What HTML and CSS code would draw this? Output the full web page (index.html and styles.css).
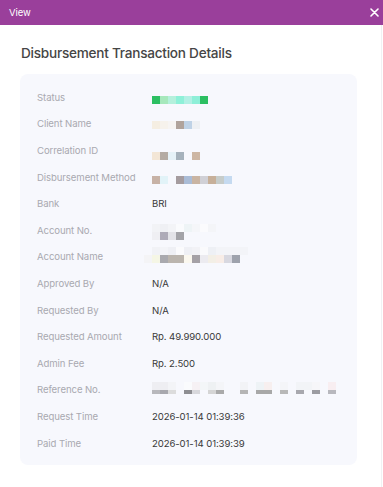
FILE: index.html
```html
<!DOCTYPE html>
<html>
<head>
<meta charset="utf-8">
<link rel="stylesheet" href="styles.css">
</head>
<body>
<div class="modal">
  <div class="modal-header">
    <span class="modal-title">View</span>
    <span class="close" aria-label="close">
      <svg width="9" height="9" viewBox="0 0 9 9"><path d="M1 1 L8 8 M8 1 L1 8" stroke="#fff" stroke-width="1.6" stroke-linecap="round"/></svg>
    </span>
  </div>
  <div class="modal-body">
    <h2 class="heading">Disbursement Transaction Details</h2>
    <div class="card">
      <div class="row"><span class="label">Status</span><span class="value"><i class="mosaic m-status"></i></span></div>
      <div class="row"><span class="label">Client Name</span><span class="value"><i class="mosaic m-client"></i></span></div>
      <div class="row"><span class="label">Correlation ID</span><span class="value"><i class="mosaic m-corr"></i></span></div>
      <div class="row"><span class="label">Disbursement Method</span><span class="value"><i class="mosaic m-method"></i></span></div>
      <div class="row"><span class="label">Bank</span><span class="value">BRI</span></div>
      <div class="row"><span class="label">Account No.</span><span class="value"><i class="mosaic m-accno"></i></span></div>
      <div class="row"><span class="label">Account Name</span><span class="value"><i class="mosaic m-accname"></i></span></div>
      <div class="row"><span class="label">Approved By</span><span class="value">N/A</span></div>
      <div class="row"><span class="label">Requested By</span><span class="value">N/A</span></div>
      <div class="row"><span class="label">Requested Amount</span><span class="value">Rp. 49.990.000</span></div>
      <div class="row"><span class="label">Admin Fee</span><span class="value">Rp. 2.500</span></div>
      <div class="row"><span class="label">Reference No.</span><span class="value"><i class="mosaic m-ref"></i></span></div>
      <div class="row"><span class="label">Request Time</span><span class="value">2026-01-14 01:39:36</span></div>
      <div class="row"><span class="label">Paid Time</span><span class="value">2026-01-14 01:39:39</span></div>
    </div>
  </div>
</div>
</body>
</html>
```
FILE: styles.css
```css
* { box-sizing: border-box; }
html, body { margin: 0; padding: 0; background: #fff; }
body { font-family: Inter, "Noto Sans", sans-serif; color: #333; }

.modal { width: 383px; height: 487px; display: flex; flex-direction: column; }

.modal-header {
  height: 25px;
  background: #9a3f9b;
  display: flex;
  align-items: center;
  justify-content: space-between;
  padding: 0 4px 0 9px;
}
.modal-title { color: #fff; font-size: 9.5px; letter-spacing: -0.1px; }
.close { display: flex; width: 10px; height: 10px; align-items: center; justify-content: center; }

.modal-body {
  flex: 1;
  padding: 18px 24px 0 20px;
  border-right: 1px solid #f1f1f3;
  margin-right: 1px;
}

.heading {
  margin: 0 0 11px 1px;
  font-size: 13.6px;
  font-weight: 500;
  color: #454545;
  letter-spacing: -0.25px;
  line-height: 20px;
}

.card {
  background: #f7f8fd;
  border-radius: 8px;
  padding: 10px 0 9px 17px;
  display: grid;
  grid-auto-rows: 26.6px;
}

.row {
  display: grid;
  grid-template-columns: 115px 1fr;
  align-items: center;
  font-size: 9.6px;
  letter-spacing: -0.1px;
}
.label { color: #a9a9b0; }
.value { color: #3a3a3a; position: relative; height: 100%; display: flex; align-items: center; }

.mosaic { display: block; position: relative; height: 8px; }

.m-status {
  width: 56px; top: 3px;
  background: linear-gradient(90deg, #2cbf62 0 8px, #a6e8bc 8px 16px, #b4f0dc 16px 24px, #8ef0d8 24px 32px, #b2f0e4 32px 40px, #8eefd8 40px 48px, #2cbf62 48px 56px);
}
.m-client {
  width: 48px; top: 1px;
  background: linear-gradient(90deg, #f5eee2 0 8px, #f6f2ec 8px 16px, #f6f4f3 16px 24px, #b0a39c 24px 32px, #bfd2e6 32px 40px, #eef0f3 40px 48px);
}
.m-corr {
  width: 48px; top: 6px;
  background: linear-gradient(90deg, #f3e6d6 0 8px, #b4aba3 8px 16px, #e6f2f8 16px 24px, #a6b2bc 24px 32px, transparent 32px 40px, #cdb6a3 40px 48px);
}
.m-method {
  width: 80px; top: 3px;
  background: linear-gradient(90deg, #c7b2a6 0 8px, #e2f3f8 8px 16px, transparent 16px 24px, #a59c9f 24px 32px, #aabcd6 32px 40px, #c9b4a2 40px 48px, #d0d0d6 48px 56px, #c7b09a 56px 64px, #c6ccca 64px 72px, #c5daf0 72px 80px);
}
.m-accno {
  width: 64px; height: 16px; top: 2px;
  background:
    linear-gradient(90deg, #efeff3 0 8px, #aeabb8 8px 16px, #e3e3e8 16px 24px, #a3a3a8 24px 32px, transparent 32px) 0 8px / 64px 8px no-repeat,
    linear-gradient(90deg, #f2f3f6 0 8px, #eff0f4 8px 16px, #f3f4f7 16px 24px, #fafbfd 24px 32px, #eef4f6 32px 40px, #f5f6f9 40px 48px, #fbfbfd 48px 56px, #f4f5f8 56px 64px) 0 0 / 64px 8px no-repeat;
}
.m-accname {
  width: 104px; height: 16px; top: -2px; left: -8px;
  background:
    linear-gradient(90deg, #f4f4f6 0 8px, #f5f6e5 8px 16px, #a9a9ae 16px 24px, #bbb5ae 24px 40px, #fbf8ef 40px 48px, #a5a1a6 48px 56px, #ecebf0 56px 64px, #f3efe6 64px 72px, #f8ede7 72px 80px, #d8d8e0 80px 88px, #9ea2ac 88px 96px, transparent 96px) 0 8px / 104px 8px no-repeat,
    linear-gradient(90deg, transparent 0 8px, #f1f2f6 8px 16px, #f3f4f8 16px 24px, #eff0f5 24px 32px, #fbfbfd 32px 40px, #eff0f5 40px 48px, #f2f2f6 48px 56px, #fafafc 56px 64px, #eef0f5 64px 72px, #f3f4f8 72px 88px) 0 0 / 104px 8px no-repeat;
}
.m-ref {
  width: 184px; height: 13px; top: -1px;
  background:
    linear-gradient(90deg, #b8b8bc 0 8px, #a8a8ae 8px 16px, #dcdcdc 16px 24px, transparent 24px 32px, #8e8e92 32px 40px, #d8d8dc 40px 48px, transparent 48px 56px, #d5d5d5 56px 64px, #aaaaaa 64px 72px, transparent 72px 88px, #b5b5b5 88px 96px, transparent 96px 104px, #a8a8a8 104px 120px, transparent 120px 128px, #b8b8b8 128px 136px, transparent 136px 144px, #a8a8ae 144px 152px, transparent 152px 160px, #9c9ca2 160px 168px, transparent 168px 176px, #b8b8be 176px 184px) 0 8px / 184px 4px no-repeat,
    linear-gradient(90deg, #eeeef2 0 16px, #f3f4f7 16px 24px, transparent 24px 32px, #fafbfd 32px 40px, #f6f1f4 40px 48px, #f3f6f8 48px 56px, #eef1f3 56px 64px, #f4f5f8 64px 72px, transparent 72px 88px, #f2f3f6 88px 96px, transparent 96px 104px, #eef3f6 104px 112px, #f7efef 112px 120px, transparent 120px 128px, #f4f5f8 128px 136px, transparent 136px 144px, #f2f4f7 144px 160px, #f6f6f9 160px 168px, transparent 168px 176px, #f8eef1 176px 184px) 0 0 / 184px 8px no-repeat;
}
```
